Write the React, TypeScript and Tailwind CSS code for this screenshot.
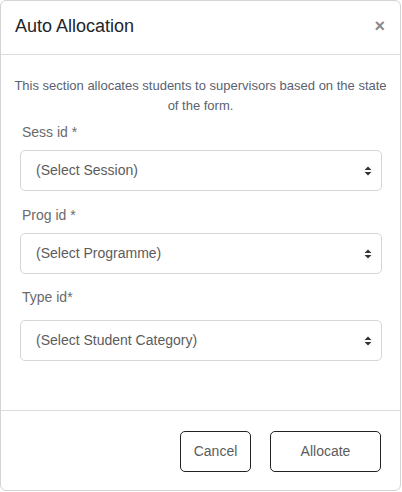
const fields = [
  { label: "Sess id *", placeholder: "(Select Session)", mt: "mt-[6px]", gap: "mt-[8px]" },
  { label: "Prog id *", placeholder: "(Select Programme)", mt: "mt-[14px]", gap: "mt-[8px]" },
  { label: "Type id*", placeholder: "(Select Student Category)", mt: "mt-[13px]", gap: "mt-[13px]" },
];

function SortArrows() {
  return (
    <svg width="8" height="10" viewBox="0 0 8 10" className="shrink-0">
      <path d="M4 0.5 L7.5 4 L0.5 4 Z" fill="#333" />
      <path d="M4 9.5 L7.5 6 L0.5 6 Z" fill="#333" />
    </svg>
  );
}

export default function App() {
  return (
    <div className="w-[402px] h-[492px] bg-white font-['Liberation_Sans',Arial,sans-serif]">
      <div className="w-[401px] h-[491px] border border-[#d4d4d4] rounded-[6px] flex flex-col">
        {/* Header */}
        <div className="h-[54px] shrink-0 border-b border-[#dcdcdc] flex items-center justify-between pl-[14px] pr-[15px] pb-[3px]">
          <h2 className="text-[18px] text-[#212529] leading-none">Auto Allocation</h2>
          <button className="text-[#8a8a8a] text-[18px] font-bold leading-none">×</button>
        </div>

        {/* Body */}
        <div className="flex-1 px-[19px] pt-[21px]">
          <p className="-mx-[8px] text-[13px] leading-[20px] text-[#5a6270] text-center">
            This section allocates students to supervisors based on the state of the form.
          </p>
          {fields.map((f) => (
            <div key={f.label} className={f.mt}>
              <label className="block pl-[2px] text-[14px] leading-[20px] text-[#6b6b6b]">{f.label}</label>
              <div
                className={`${f.gap} h-[41px] w-[362px] border border-[#d6d6d6] rounded-[5px] flex items-center justify-between pl-[15px] pr-[9px]`}
              >
                <span className="text-[14px] text-[#5c5c5c]">{f.placeholder}</span>
                <SortArrows />
              </div>
            </div>
          ))}
        </div>

        {/* Footer */}
        <div className="h-[80px] shrink-0 border-t border-[#dcdcdc] flex items-center justify-end gap-[19px] pr-[19px] pt-[1px]">
          <button className="w-[71px] h-[41px] border border-[#222] rounded-[5px] text-[14px] text-[#5c5c5c]">
            Cancel
          </button>
          <button className="w-[111px] h-[41px] border border-[#222] rounded-[5px] text-[14px] text-[#5c5c5c]">
            Allocate
          </button>
        </div>
      </div>
    </div>
  );
}
